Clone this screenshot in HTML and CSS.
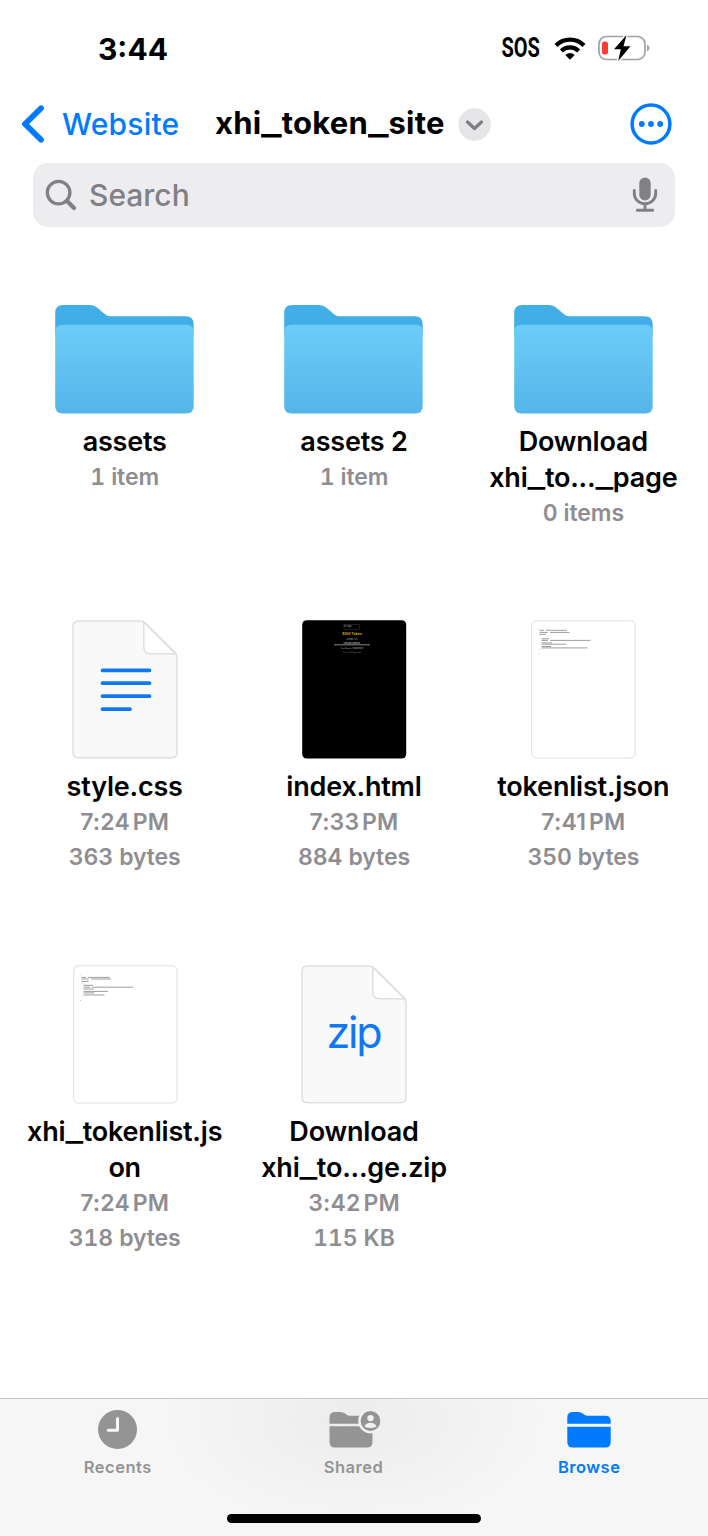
FILE: index.html
```html
<!DOCTYPE html>
<html lang="en">
<head>
<meta charset="utf-8">
<title>xhi_token_site</title>
<link rel="stylesheet" href="styles.css">
</head>
<body>
<svg class="defs" width="0" height="0" aria-hidden="true">
  <defs>
    <linearGradient id="front" x1="0" y1="0" x2="0" y2="1">
      <stop offset="0" stop-color="#6dcdf8"/><stop offset="1" stop-color="#54b5ea"/>
    </linearGradient>
    <symbol id="folder" viewBox="0.800 0 139 139">
      <path fill="#41aee8" d="M1 60V38Q1 30 9 30H36Q40 30 43.500 33L50.500 39Q53 41.300 56 41.300H131.500Q139.500 41.300 139.500 49.500V60Z"/>
      <path fill="url(#front)" d="M1 57Q1 49.700 8.500 49.700H132Q139.500 49.700 139.500 57V131Q139.500 138.500 132 138.500H8.500Q1 138.500 1 131Z"/>
    </symbol>
    <symbol id="page" viewBox="0 0 106 139">
      <path fill="#f9f9f9" stroke="#dfdfe1" stroke-width="1.500" d="M6.500 1H68Q71 1 73.500 3.500L102.500 32Q105 34.500 105 38V132.500Q105 137.700 99.500 137.700H6.500Q1 137.700 1 132.500V6.500Q1 1 6.500 1Z"/>
      <path fill="#fff" stroke="#dfdfe1" stroke-width="1.500" d="M71.800 2V27Q71.800 33.700 78.500 33.700H103.500Z"/>
    </symbol>
  </defs>
</svg>

<header class="status">
  <span class="time">3:44</span>
  <span class="indicators">
    <span class="sos">SOS</span>
    <svg class="wifi" width="32" height="24" viewBox="0 0 32 24" fill="none" stroke="#000" stroke-width="4.200">
      <path d="M2 9.400A19.800 19.800 0 0 1 30 9.400"/>
      <path d="M7.400 14.900A12.200 12.200 0 0 1 24.600 14.900"/>
      <path fill="#000" stroke="none" d="M16 23.800L11.300 19.100Q16 15.100 20.700 19.100Z"/>
    </svg>
    <svg class="battery" width="52" height="26" viewBox="0 0 52 26">
      <rect x="1" y="1.500" width="46" height="23" rx="7.500" fill="#fff" stroke="#a2a2a4" stroke-width="1.700"/>
      <rect x="4" y="6.500" width="6" height="13" rx="2.500" fill="#ff3b30"/>
      <path d="M49 9.500Q51.500 10.500 51.500 13T49 16.500Z" fill="#a2a2a4"/>
      <path d="M28.500 0L16 14.200H22.800L20.200 26L32.500 11.300H25.500Z" fill="#000" stroke="#fff" stroke-width="3" paint-order="stroke"/>
    </svg>
  </span>
</header>

<nav class="navbar">
  <svg class="back" width="24" height="38" viewBox="0 0 24 38"><path d="M20 3.300L4 19L20 34.700" fill="none" stroke="#007aff" stroke-width="5.800" stroke-linecap="round" stroke-linejoin="round"/></svg>
  <a class="parent">Website</a>
  <h1 class="title">xhi<i>_</i>token<i>_</i>site</h1>
  <svg class="caret" width="33" height="33" viewBox="0 0 33 33"><circle cx="16.500" cy="16.500" r="16.200" fill="#e6e6e8"/><path d="M9.500 14L16.500 20.500L23.500 14" fill="none" stroke="#7d7d82" stroke-width="3.200" stroke-linecap="round" stroke-linejoin="round"/></svg>
  <svg class="more" width="42" height="42" viewBox="0 0 42 42"><circle cx="21" cy="21" r="18.900" fill="none" stroke="#007aff" stroke-width="3.500"/><g fill="#007aff"><circle cx="11.800" cy="21" r="2.900"/><circle cx="21" cy="21" r="2.900"/><circle cx="30.200" cy="21" r="2.900"/></g></svg>
</nav>

<div class="search">
  <svg width="32" height="32" viewBox="0 0 32 32" fill="none" stroke="#808085" stroke-linecap="round"><circle cx="13.600" cy="13.600" r="11.300" stroke-width="3.300"/><path d="M22 22L29 29" stroke-width="4.300"/></svg>
  <span class="placeholder">Search</span>
  <svg width="26" height="36" viewBox="0 0 26 36"><rect x="7.300" y="0.500" width="11.400" height="23" rx="5.700" fill="#808085"/><path d="M2.300 13.500V16.500A10.700 10.200 0 0 0 23.700 16.500V13.500M13 27V33M5.300 33.200H20.700" fill="none" stroke="#808085" stroke-width="2.900" stroke-linecap="round"/></svg>
</div>

<main class="files">
  <article class="file"><svg class="folder"><use href="#folder"/></svg><h2>assets</h2><p>1 item</p></article>
  <article class="file"><svg class="folder"><use href="#folder"/></svg><h2>assets 2</h2><p>1 item</p></article>
  <article class="file"><svg class="folder"><use href="#folder"/></svg><h2>Download<br>xhi<i>_</i>to...<i>_</i>page</h2><p>0 items</p></article>

  <article class="file">
    <svg class="doc" viewBox="0 0 106 139"><use href="#page"/><path d="M30.500 50.300H77.500M30.500 63.200H77.500M30.500 76.200H77.500M30.500 89.200H58" stroke="#0f78f5" stroke-width="3.700" stroke-linecap="round"/></svg>
    <h2>style.css</h2><p class="when">7:24 PM</p><p>363 bytes</p>
  </article>
  <article class="file">
    <svg class="doc" viewBox="0 0 106 139">
      <rect x="1.200" y="0.300" width="104" height="138.200" rx="4.500"/>
      <rect x="43" y="4.500" width="15.500" height="5" fill="none" stroke="#333" stroke-width=".6"/>
      <g class="micro" text-anchor="middle" fill="#aaa"><text x="46.500" y="6.600" font-size="2">XHI logo</text><text x="51" y="15.300" font-size="3.500" fill="#c9a20c" font-weight="700">$XHI Token</text><text x="51" y="20" font-size="1.900">Symbol: XHI</text><text x="51" y="23.700" font-size="1.900" font-weight="700">Contract Address:</text><text x="51" y="29.400" font-size="1.800">Total Supply: 1000000000</text><text x="51" y="33.300" font-size="1.800" fill="#917913">View on Polygonscan</text></g>
      <path d="M33 24.800H69" stroke="#aaa" stroke-width=".8"/>
    </svg>
    <h2>index.html</h2><p class="when">7:33 PM</p><p>884 bytes</p>
  </article>
  <article class="file">
    <svg class="doc" viewBox="0 0 106 139">
      <rect x="1.700" y="0.800" width="103.300" height="137.200" rx="4.500" fill="#fff" stroke="#dedee2"/>
      <g fill="none" stroke="#858585" stroke-width=".8"><path d="M9.500 10.300H14M16 10.300H37M9.500 12.400H18M20 12.400H39.500M9.500 14.300H16M11.500 18.800H19M11.500 20.400H18M20 20.400H60.500M11.500 22.900H22M11.500 24.200H36M11.500 26.500H21M11.500 27.900H57.500"/></g>
      <path d="M8 8.500L9 9.500M9.500 30L10.500 29M8 34.500L9 33.500M9.500 16.200H10.500" stroke="#999" stroke-width=".6"/>
    </svg>
    <h2>tokenlist.json</h2><p class="when">7:41 PM</p><p>350 bytes</p>
  </article>

  <article class="file">
    <svg class="doc" viewBox="0 0 106 139">
      <rect x="1.700" y="0.800" width="103.300" height="137.200" rx="4.500" fill="#fff" stroke="#dedee2"/>
      <g fill="none" stroke="#858585" stroke-width=".8"><path d="M9.500 12.400H14M16 12.400H37.500M9.500 14H17M19 14H39M9.500 16.400H16.500M11.500 20.300H21M11.500 22.200H18M20 22.200H61M11.500 24H22M11.500 26.400H36M11.500 27.900H22M11.500 30H32.500"/></g>
      <path d="M8 10.300L9 11.300M9.500 32.300L10.500 31.300M8 36L9 35M9.500 18.300H10.500" stroke="#999" stroke-width=".6"/>
    </svg>
    <h2>xhi<i>_</i>tokenlist.js<br>on</h2><p class="when">7:24 PM</p><p>318 bytes</p>
  </article>
  <article class="file">
    <svg class="doc" viewBox="0 0 106 139"><use href="#page"/><text class="ext" x="53.500" y="83" text-anchor="middle" textLength="56">zip</text></svg>
    <h2>Download<br>xhi<i>_</i>to...ge.zip</h2><p class="when">3:42 PM</p><p>115 KB</p>
  </article>
</main>

<footer class="tabbar">
  <div class="tabs">
    <a class="tab">
      <svg width="54" height="42" viewBox="0 0 54 42"><circle cx="26.500" cy="20.500" r="19.500" fill="#949494"/><path d="M26.500 9.500V21.300H17.200" fill="none" stroke="#f6f6f6" stroke-width="3" stroke-linecap="round" stroke-linejoin="round"/></svg>
      <span>Recents</span>
    </a>
    <a class="tab">
      <svg width="54" height="42" viewBox="0 0 54 42"><path fill="#949494" d="M2.500 14.700V8.500Q2.500 3 8 3H13.500Q16 3 18 4.500L19.500 5.700Q21 6.700 23 6.700H40.500Q45.500 6.700 45.500 12V14.700ZM2.500 17.300H45.500V33Q45.500 38.500 40 38.500H8Q2.500 38.500 2.500 33Z"/><circle cx="43.500" cy="12" r="12.300" fill="#f1f1f1"/><circle cx="43.500" cy="12" r="9.900" fill="#949494"/><circle cx="43.500" cy="9.100" r="3.200" fill="#f1f1f1"/><path d="M37.500 17.400Q39 13.700 43.500 13.700T49.500 17.400Q43.500 20.600 37.500 17.400Z" fill="#f1f1f1"/></svg>
      <span>Shared</span>
    </a>
    <a class="tab active">
      <svg width="54" height="42" viewBox="0 0 54 42"><path fill="#007aff" d="M5.300 14.700V8.500Q5.300 3 10.800 3H16.300Q18.800 3 20.800 4.500L22.300 5.700Q23.800 6.700 25.800 6.700H43.300Q48.700 6.700 48.700 12V14.700ZM5.300 17.700H48.700V33Q48.700 38.500 43.200 38.500H10.800Q5.300 38.500 5.300 33Z"/></svg>
      <span>Browse</span>
    </a>
  </div>
  <div class="home"></div>
</footer>
</body>
</html>
```

FILE: styles.css
```css
* { box-sizing: border-box; margin: 0; padding: 0; }
body {
  width: 708px; height: 1536px; background: #fff; color: #000;
  font-family: Inter, "Liberation Sans", sans-serif;
  display: flex; flex-direction: column; overflow: hidden;
}
svg { display: block; flex: none; }
.defs { position: absolute; }
.status { height: 96px; padding: 0 58px 0 98px; display: flex; justify-content: space-between; align-items: center; }
.time { font-size: 30px; font-weight: 700; padding-top: 1px; }
.indicators { display: flex; align-items: center; }
.sos { font: 700 27px/36px Roboto, sans-serif; transform: scaleX(.74); transform-origin: 100% 50%; }
.wifi { margin-left: 14px; }
.battery { margin-left: 12px; }
.navbar { height: 56px; padding: 0 36px 0 21px; display: flex; align-items: center; }
.parent { margin-left: 17px; font-size: 30px; font-weight: 500; letter-spacing: .2px; color: #007aff; white-space: nowrap; width: 118px; }
.title { margin-left: 35px; font-size: 31px; line-height: 38px; padding-bottom: 2px; font-weight: 700; letter-spacing: .2px; white-space: nowrap; width: 230px; }
.caret { margin-left: 13px; }
.more { margin-left: auto; }
i { display: inline-block; font-style: normal; margin: 0 .09em; transform: scaleX(1.4); }
.search {
  margin: 11px 33px 0; height: 64px; padding: 0 17px 0 12px; border-radius: 15px; background: #ededf0;
  display: flex; align-items: center; gap: 12px;
}
.placeholder { flex: 1; font-size: 30px; font-weight: 500; color: #808085; }
.files {
  margin-top: 48px; padding: 0 10px; height: 1123px;
  display: grid; grid-template-columns: repeat(3, 1fr); grid-auto-rows: 345px;
}
.file { display: flex; flex-direction: column; align-items: center; text-align: center; }
.folder { width: 139px; height: 139px; }
.doc { width: 106px; height: 139px; }
.file h2 { margin-top: 10px; font-size: 27px; line-height: 36px; font-weight: 600; letter-spacing: -.2px; white-space: nowrap; }
.file p { font-size: 23px; line-height: 35px; font-weight: 600; letter-spacing: -.1px; font-variant-numeric: tabular-nums; color: #8e8e92; white-space: nowrap; }
.file .when { font-variant-numeric: normal; letter-spacing: .15px; word-spacing: -3px; }
.ext { font-size: 43px; fill: #0f78f5; }
.tabbar {
  height: 138px; border-top: 1px solid #cacaca;
  background: radial-gradient(ellipse 190px 110px at 50% 20px, #ececec, #f6f6f6);
}
.tabs { padding: 10px 1px 0 0; display: flex; justify-content: center; }
.tab { width: 236px; display: flex; flex-direction: column; align-items: center; font-size: 16.500px; line-height: 22px; font-weight: 600; letter-spacing: .5px; color: #949494; }
.tab span { margin-top: 5px; }
.tab.active { color: #007aff; }
.home { margin: 36px auto 0; width: 254px; height: 9px; border-radius: 5px; background: #000; }
```
